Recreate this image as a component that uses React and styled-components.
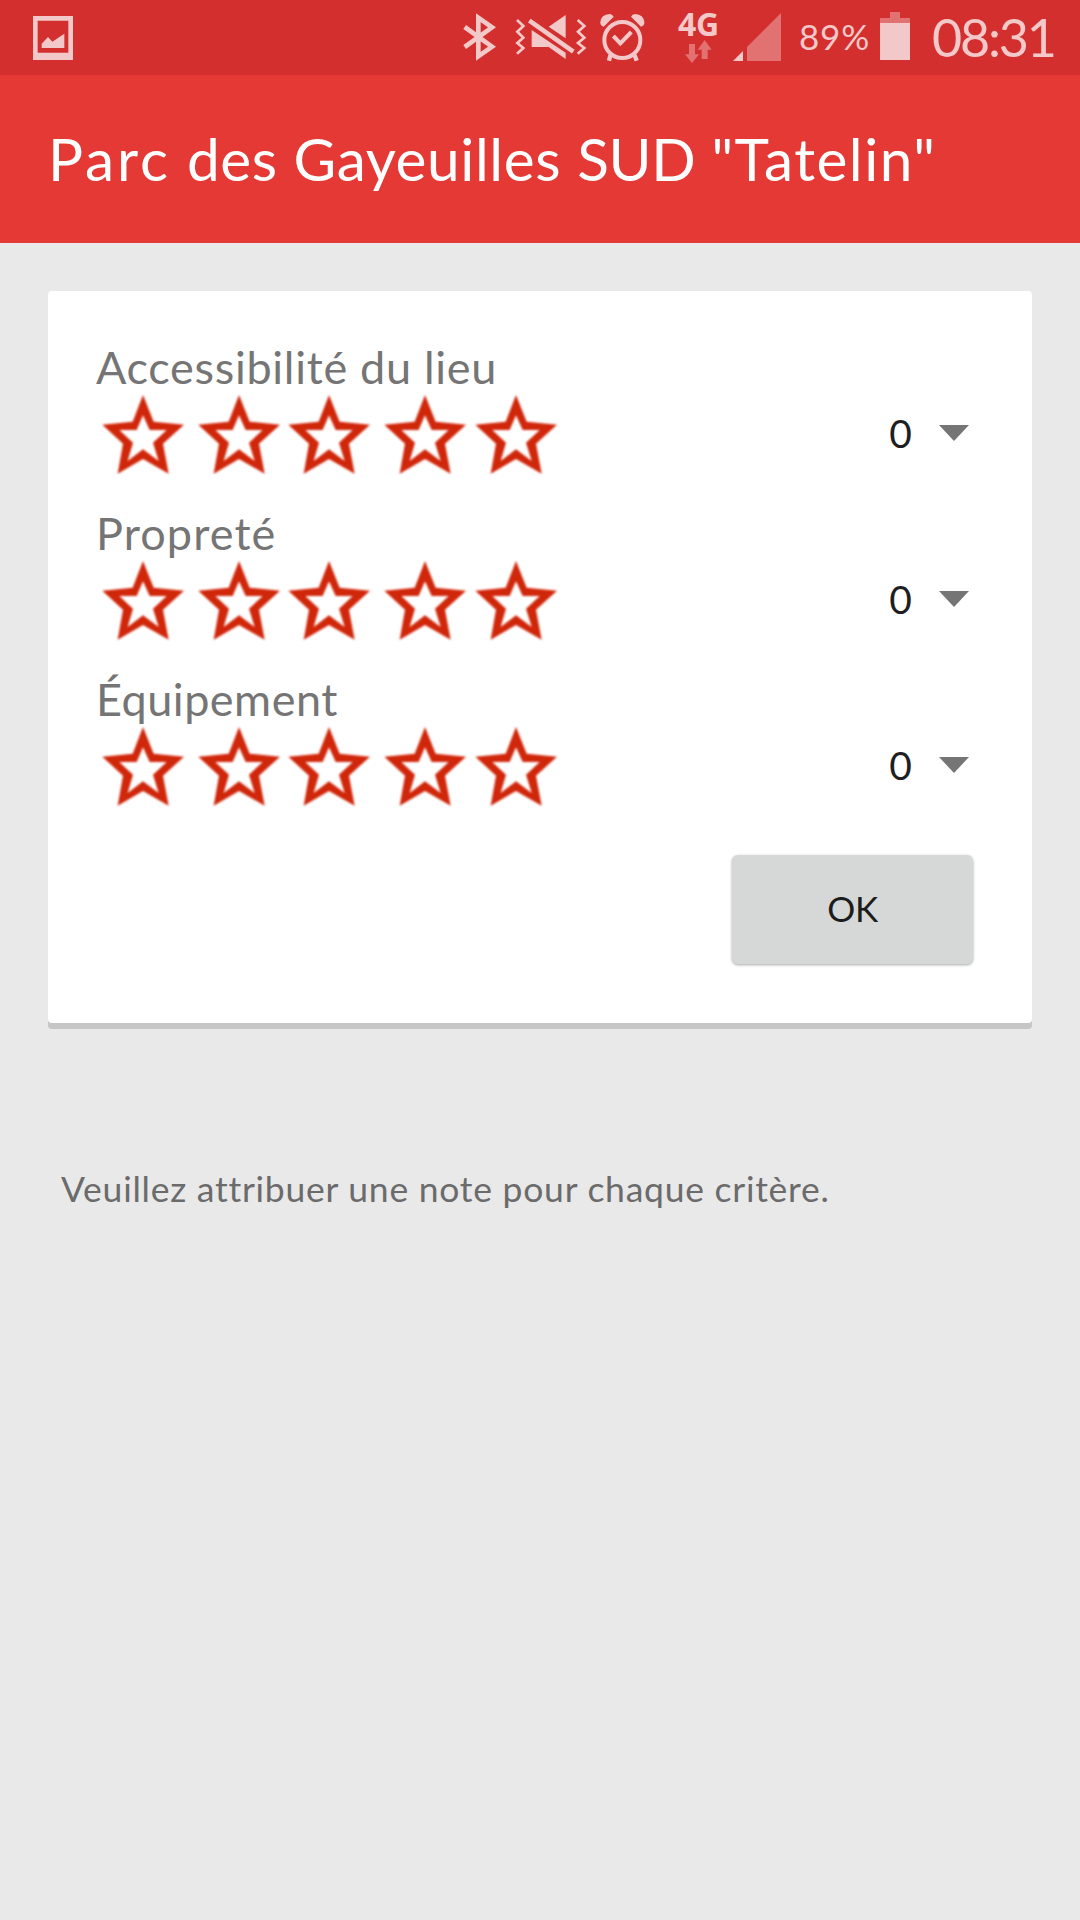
import React from 'react';
import styled, { createGlobalStyle } from 'styled-components';

const INK = '#f3c8c8';
const DIM = '#e27171';

const GlobalStyle = createGlobalStyle`
  *, *::before, *::after { box-sizing: border-box; }
  body {
    margin: 0;
    background: #e9e9e9;
    font-family: Lato, "Open Sans", sans-serif;
  }
`;

const Screen = styled.div`
  display: flex;
  flex-direction: column;
  width: 1080px;
  height: 1920px;
  overflow: hidden;
  background: #e9e9e9;
`;

const StatusBar = styled.header`
  display: flex;
  height: 75px;
  padding: 0 28px 0 33px;
  background: #d32f2f;
  color: ${INK};
`;

const Spacer = styled.div`
  flex: 1;
`;

const Glyph = styled.svg`
  display: block;
  flex: none;
  width: ${(p) => p.$w}px;
  height: ${(p) => p.$h || 75}px;
  margin-left: ${(p) => p.$gap || 0}px;
  overflow: visible;
`;

const Network = styled.div`
  display: flex;
  flex-direction: column;
  width: 39px;
  margin-left: 33px;
  padding-top: 8px;
  font: 700 32px/32px "Noto Sans", "Open Sans", sans-serif;
  letter-spacing: -0.3px;
  white-space: nowrap;
`;

const Percent = styled.div`
  width: 73px;
  margin-left: 18px;
  font-size: 35px;
  font-weight: 400;
  line-height: 73px;
  letter-spacing: 0.8px;
  white-space: nowrap;
`;

const Clock = styled.time`
  width: 120px;
  margin-left: 22px;
  font-size: 52px;
  font-weight: 400;
  line-height: 74px;
  letter-spacing: -2.2px;
  white-space: nowrap;
`;

const AppBar = styled.div`
  height: 168px;
  padding: 41px 48px 0;
  background: #e53935;
`;

const Title = styled.h1`
  margin: 0;
  color: #fff;
  font-size: 58.5px;
  font-weight: 400;
  line-height: 84px;
  letter-spacing: 1.1px;
  white-space: nowrap;
`;

const Word = styled.span`
  letter-spacing: ${(p) => p.$track}px;
`;

const Card = styled.main`
  height: 732px;
  margin: 48px 48px 0;
  padding: 48px 48px 0 48px;
  background: #fff;
  border-radius: 4px;
  box-shadow: 0 6px 0 #c6c6c6;
`;

const Criterion = styled.section`
  height: 166px;
`;

const Label = styled.div`
  height: 56px;
  color: #757575;
  font-size: 45px;
  line-height: 57px;
  letter-spacing: ${(p) => p.$track}px;
  white-space: nowrap;
`;

const Controls = styled.div`
  display: flex;
  align-items: flex-start;
  justify-content: space-between;
`;

const Stars = styled.div`
  display: flex;
  padding-left: 5.5px;
  filter: blur(0.9px);
`;

const Star = styled.svg`
  display: block;
  width: 82px;
  height: 79px;
  margin-right: ${(p) => p.$after}px;
`;

const Select = styled.div`
  display: flex;
  align-items: center;
  height: 76px;
  padding-right: 15px;
  color: #1f1f1f;
  font-size: 39px;
  line-height: 76px;
`;

const Score = styled.span`
  width: 23px;
  margin-right: 27px;
  text-align: center;
`;

const Arrow = styled.svg`
  display: block;
  width: 30px;
  height: 16px;
`;

const Actions = styled.div`
  display: flex;
  justify-content: flex-end;
  padding: 18px 11px 0 0;
`;

const OkButton = styled.button`
  width: 241px;
  height: 109px;
  padding: 0 0 2px;
  border: 0;
  border-radius: 6px;
  background: #d6d8d7;
  box-shadow: 0 1px 3px rgba(0, 0, 0, 0.35);
  color: #1c1c1c;
  font: 400 35px/107px Lato, sans-serif;
  letter-spacing: -0.3px;
`;

const Hint = styled.p`
  margin: 136px 0 0 61px;
  color: #6b6b6b;
  font-size: 35.5px;
  line-height: 60px;
  letter-spacing: 0.75px;
  white-space: nowrap;
`;

const starGaps = [14, 8, 14, 9.7, 0];

function RatingStar({ after }) {
  return (
    <Star viewBox="64 196 246 237" $after={after}>
      <path
        fill="#d0260a"
        fillRule="evenodd"
        d="M187 196 219 276 310 285 247 342 264 432 187 388 111 432 127 342 65 285 156 276ZM187 257 168 301 116 301 157 339 141 394 187 359 234 394 217 339 258 301 207 301Z"
      />
    </Star>
  );
}

function Rating({ label, track }) {
  return (
    <Criterion>
      <Label $track={track}>{label}</Label>
      <Controls>
        <Stars>
          {starGaps.map((gap, i) => (
            <RatingStar key={i} after={gap} />
          ))}
        </Stars>
        <Select>
          <Score>0</Score>
          <Arrow viewBox="0 0 30 16">
            <path fill="#757575" d="M0 0H30L15 16Z" />
          </Arrow>
        </Select>
      </Controls>
    </Criterion>
  );
}

function PictureIcon() {
  return (
    <Glyph $w={40} viewBox="99 0 120 225" fill={INK}>
      <path fillRule="evenodd" d="M99 48H219V180H99ZM113 62V158H205V62Z" />
      <path d="M125 131 144 111 157 125 193 101V144H125Z" />
    </Glyph>
  );
}

function BluetoothIcon() {
  return (
    <Glyph $w={33} viewBox="69 0 99 225" fill="none" stroke={INK} strokeWidth="14">
      <path strokeMiterlimit="8" d="M74 81 156 140 115 169V53L156 82 74 141" />
    </Glyph>
  );
}

function VibrateIcon() {
  return (
    <Glyph $w={70} $gap={20} viewBox="229 0 210 225" fill={INK}>
      <g fill="none" stroke={INK} strokeWidth="8">
        <path d="M232 60 251 78 233 95 251 113 233 129 251 144 232 161" />
        <path d="M414 60 434 78 415 95 434 113 415 129 434 144 414 161" />
      </g>
      <path d="M327 80 378 45V115ZM276 90 378 158V177L327 141H276Z" />
      <path d="M269 62 401 155" stroke={INK} strokeWidth="14" />
    </Glyph>
  );
}

function AlarmIcon() {
  return (
    <Glyph $w={45} $gap={14} viewBox="482 0 135 225" fill={INK}>
      <circle cx="549" cy="120" r="54" fill="none" stroke={INK} strokeWidth="12" />
      <path d="M522 108 543 130 576 96" fill="none" stroke={INK} strokeWidth="12" />
      <path d="M513 166 509 182M586 166 592 182" stroke={INK} strokeWidth="13" />
      <path d="M493 80Q483 78 483 67 485 43 511 42 519 42 523 50Z" />
      <path d="M605 80Q615 78 615 67 613 43 587 42 579 42 575 50Z" />
    </Glyph>
  );
}

function DataArrows() {
  return (
    <Glyph $w={27} $h={23} $gap={7} viewBox="79 120 81 69" fill={DIM}>
      <path d="M91 132H109V163H121L100 189 79 163H91ZM117 149 138 120 159 149H147V177H129V149Z" />
    </Glyph>
  );
}

function SignalIcon() {
  return (
    <Glyph $w={48} $gap={16} viewBox="222 0 144 225" fill={INK}>
      <path d="M222 183 252 153V183Z" />
      <path fill={DIM} d="M264 141 366 39V183H264Z" />
    </Glyph>
  );
}

function BatteryIcon() {
  return (
    <Glyph $w={30} $gap={8} viewBox="63 0 90 225" fill={INK}>
      <path fill={DIM} d="M93 36H123V54H153V69H63V54H93Z" />
      <path d="M63 69H153V180H63Z" />
    </Glyph>
  );
}

export default function App() {
  return (
    <Screen>
      <GlobalStyle />
      <StatusBar>
        <PictureIcon />
        <Spacer />
        <BluetoothIcon />
        <VibrateIcon />
        <AlarmIcon />
        <Network>
          4G
          <DataArrows />
        </Network>
        <SignalIcon />
        <Percent>89%</Percent>
        <BatteryIcon />
        <Clock>08:31</Clock>
      </StatusBar>
      <AppBar>
        <Title>
          <Word $track={2.9}>Parc</Word> <Word $track={0.5}>des</Word>{' '}
          <Word $track={0.6}>Gayeuilles</Word> <Word $track={-0.4}>SUD</Word>{' '}
          <Word $track={1.5}>"Tatelin"</Word>
        </Title>
      </AppBar>
      <Card>
        <Rating label="Accessibilité du lieu" track={0.7} />
        <Rating label="Propreté" track={1.1} />
        <Rating label="Équipement" track={0.5} />
        <Actions>
          <OkButton>OK</OkButton>
        </Actions>
      </Card>
      <Hint>Veuillez attribuer une note pour chaque critère.</Hint>
    </Screen>
  );
}
